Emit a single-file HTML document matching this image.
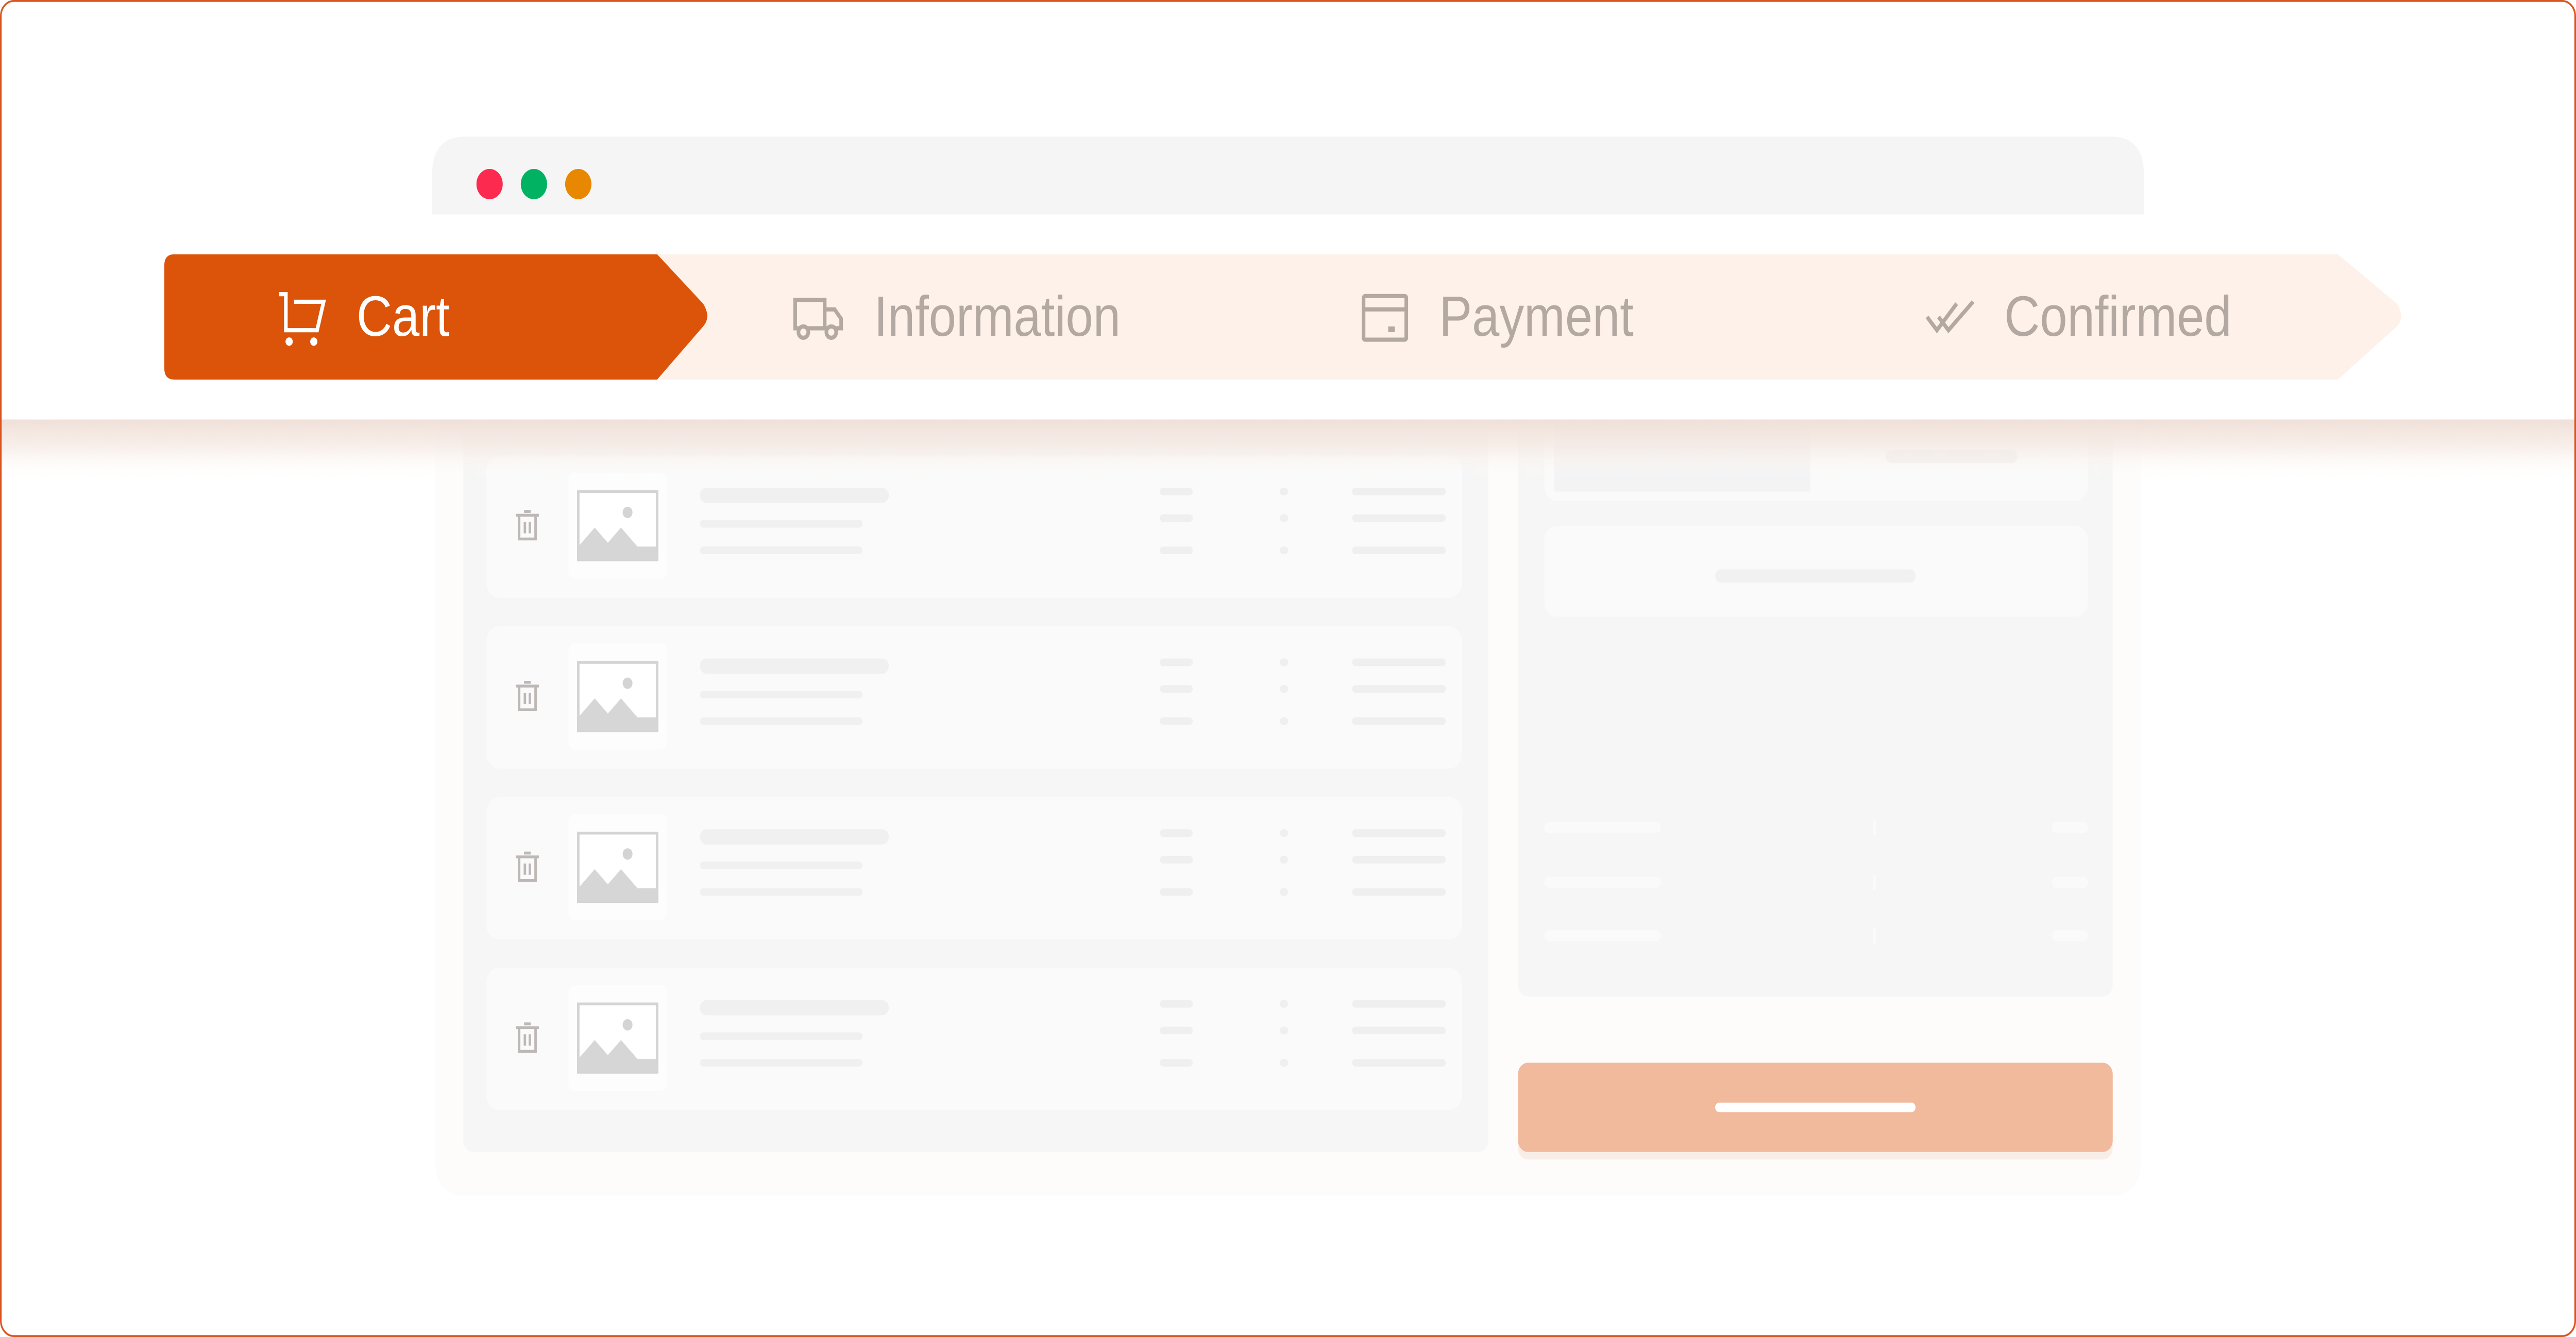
<!DOCTYPE html>
<html><head><meta charset="utf-8"><style>
html,body{margin:0;padding:0;width:100%;height:100%;overflow:hidden;background:#fff}
svg{display:block;width:100vw;height:100vh}
</style></head><body>
<svg viewBox="0 0 1568 704.5" preserveAspectRatio="none" xmlns="http://www.w3.org/2000/svg">
<defs>
<linearGradient id="sh" x1="0" y1="0" x2="0" y2="1">
<stop offset="0" stop-color="#efe0d8"/><stop offset="0.45" stop-color="#f5e8e1" stop-opacity="0.7"/><stop offset="1" stop-color="#fff" stop-opacity="0"/>
</linearGradient>
<g id="row">
<rect x="296" y="0" width="594" height="75" rx="8" fill="#fafafa"/>
<g fill="none" stroke="#bdb8b6" stroke-width="1.5" transform="translate(312,28)"><path d="M2 3.5H16M7 1.5H11M4 3.5V16H14V3.5M7.5 7V13M10.5 7V13"/></g>
<rect x="346" y="9" width="60" height="56" rx="4" fill="#fdfdfd"/>
<rect x="352" y="19" width="48" height="36" fill="#fff" stroke="#d4d4d4" stroke-width="1.5"/>
<path d="M352 55 V48 L362 38 L370 46 L378 38 L388 48 L400 48 V55Z" fill="#d6d6d6"/>
<circle cx="382" cy="30" r="3" fill="#d4d4d4"/>
<rect x="426" y="17" width="115" height="8" rx="4" fill="#f0f0f0"/>
<rect x="426" y="34" width="99" height="4" rx="2" fill="#f0f0f0"/>
<rect x="426" y="48" width="99" height="4" rx="2" fill="#f0f0f0"/>
<g fill="#efefef">
<rect x="706" y="17" width="20" height="4" rx="2"/><rect x="779" y="17" width="5" height="4" rx="2"/><rect x="823" y="17" width="57" height="4" rx="2"/>
<rect x="706" y="31" width="20" height="4" rx="2"/><rect x="779" y="31" width="5" height="4" rx="2"/><rect x="823" y="31" width="57" height="4" rx="2"/>
<rect x="706" y="48" width="20" height="4" rx="2"/><rect x="779" y="48" width="5" height="4" rx="2"/><rect x="823" y="48" width="57" height="4" rx="2"/>
</g>
</g>
</defs>
<rect x="0" y="0" width="1568" height="704.5" fill="#fff"/>
<!-- content card -->
<rect x="265" y="190" width="1038" height="440" rx="16" fill="#fdfcfb"/>
<rect x="282" y="190" width="624" height="417" rx="6" fill="#f6f6f6"/>
<rect x="924" y="190" width="362" height="335" rx="6" fill="#f6f6f6"/>
<rect x="940" y="190" width="331" height="74" rx="8" fill="#fafafa"/>
<rect x="946" y="195" width="156" height="64" fill="#f3f3f3"/>
<rect x="1148" y="237" width="80" height="7" rx="3.5" fill="#efefef"/>
<rect x="940" y="277" width="331" height="48" rx="8" fill="#fafafa"/>
<rect x="1044" y="300" width="122" height="7" rx="3.5" fill="#f1f1f1"/>
<g fill="#fafafa">
<rect x="940" y="433" width="71" height="6" rx="3"/><rect x="940" y="462" width="71" height="6" rx="3"/><rect x="940" y="490" width="71" height="6" rx="3"/>
<rect x="1249" y="433" width="22" height="6" rx="3"/><rect x="1249" y="462" width="22" height="6" rx="3"/><rect x="1249" y="490" width="22" height="6" rx="3"/>
<rect x="1140" y="432" width="2" height="8"/><rect x="1140" y="461" width="2" height="8"/><rect x="1140" y="489" width="2" height="8"/>
</g>
<rect x="924" y="564" width="362" height="47" rx="6" fill="#f6e4da" opacity="0.6"/>
<rect x="924" y="560" width="362" height="47" rx="6" fill="#f1ba9d"/>
<rect x="1044" y="581" width="122" height="5" rx="2.5" fill="#fff"/>
<use href="#row" transform="translate(0,240)"/>
<use href="#row" transform="translate(0,330)"/>
<use href="#row" transform="translate(0,420)"/>
<use href="#row" transform="translate(0,510)"/>
<!-- white header band + shadow -->
<rect x="1" y="221" width="1566" height="32" fill="url(#sh)"/>
<rect x="1" y="1" width="1566" height="220" rx="8" fill="#fff"/>
<rect x="1" y="100" width="1566" height="121" fill="#fff"/>
<!-- browser bar -->
<path d="M263 113 V92 Q263 72 283 72 H1285 Q1305 72 1305 92 V113 Z" fill="#f5f5f5"/>
<circle cx="298" cy="97" r="8" fill="#fd2a4f"/>
<circle cx="325" cy="97" r="8" fill="#00b262"/>
<circle cx="352" cy="97" r="8" fill="#e88800"/>
<!-- stepper -->
<path d="M398 134 H1423 L1459 160 Q1464 167 1459 172 L1423 200 H398 Z" fill="#fdf1e9"/>
<path d="M106 134 H400 L428 160 Q433 167 428 172 L400 200 H106 Q100 200 100 194 V140 Q100 134 106 134 Z" fill="#db540a"/>
<path d="M170 155 H174 V174 H193 L197 159 H179" fill="none" stroke="#fff" stroke-width="2.2"/>
<circle cx="176" cy="180" r="2.2" fill="#fff"/><circle cx="191" cy="180" r="2.2" fill="#fff"/>
<g fill="none" stroke="#b3a8a2" stroke-width="2.2">
<path d="M484 158 H502 V173 H484 Z M502 163 H508 L512 168 V173 H502"/>
<circle cx="489" cy="175" r="3" fill="#fdf1e9"/><circle cx="506" cy="175" r="3" fill="#fdf1e9"/>
<rect x="830" y="156" width="26" height="23" rx="1"/><path d="M830 163 H856"/>
<path d="M1173 167 L1179 174 L1191 160 M1180 167 L1186 174 L1201 159"/>
</g>
<rect x="845" y="172" width="4" height="3" fill="#b3a8a2"/>
<g font-family="Liberation Sans, sans-serif" font-size="30">
<text x="217" y="177" fill="#fff">Cart</text>
<text x="532" y="177" fill="#b3a8a2">Information</text>
<text x="876" y="177" fill="#b3a8a2">Payment</text>
<text x="1220" y="177" fill="#b3a8a2">Confirmed</text>
</g>
<rect x="0.5" y="0.5" width="1567" height="703.5" rx="8" fill="none" stroke="#d9541e" stroke-width="1"/>
</svg>
</body></html>
